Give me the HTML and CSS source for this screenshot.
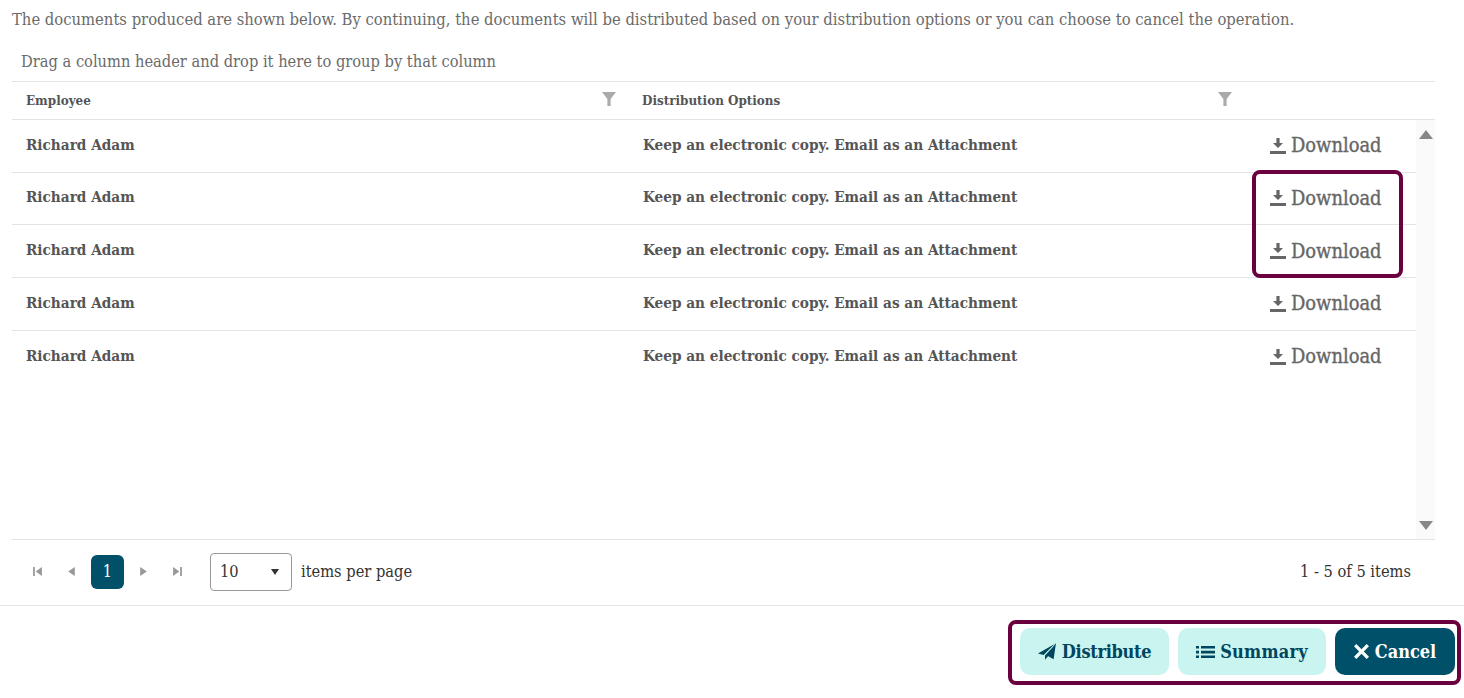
FILE: index.html
```html
<!DOCTYPE html>
<html lang="en">
<head>
  <meta charset="UTF-8" />
  <title>Distribute Documents</title>
  <link rel="stylesheet" href="styles.css">
</head>
<body>
  <p class="intro">The documents produced are shown below. By continuing, the documents will be distributed based on your distribution options or you can choose to cancel the operation.</p>

  <div class="grid">
    <div class="group-hint">Drag a column header and drop it here to group by that column</div>

    <div class="grid-head">
      <div class="head-cell">Employee
        <svg class="filter" viewBox="0 0 14 14"><path d="M0 0h14L8.6 7v7H5.4V7z"/></svg>
      </div>
      <div class="head-cell">Distribution Options
        <svg class="filter" viewBox="0 0 14 14"><path d="M0 0h14L8.6 7v7H5.4V7z"/></svg>
      </div>
      <div></div>
    </div>

    <div class="grid-body">
      <div class="rows">
        <div class="row">
          <div class="cell">Richard Adam</div>
          <div class="cell cell-opt">Keep an electronic copy. Email as an Attachment</div>
          <a class="download"><svg viewBox="0 0 16 16"><path d="M6.4 0h3.2v5H13L8 10 3 5h3.4zM0 13h16v3H0z"/></svg>Download</a>
        </div>
        <div class="row">
          <div class="cell">Richard Adam</div>
          <div class="cell cell-opt">Keep an electronic copy. Email as an Attachment</div>
          <a class="download"><svg viewBox="0 0 16 16"><path d="M6.4 0h3.2v5H13L8 10 3 5h3.4zM0 13h16v3H0z"/></svg>Download</a>
        </div>
        <div class="row">
          <div class="cell">Richard Adam</div>
          <div class="cell cell-opt">Keep an electronic copy. Email as an Attachment</div>
          <a class="download"><svg viewBox="0 0 16 16"><path d="M6.4 0h3.2v5H13L8 10 3 5h3.4zM0 13h16v3H0z"/></svg>Download</a>
        </div>
        <div class="row">
          <div class="cell">Richard Adam</div>
          <div class="cell cell-opt">Keep an electronic copy. Email as an Attachment</div>
          <a class="download"><svg viewBox="0 0 16 16"><path d="M6.4 0h3.2v5H13L8 10 3 5h3.4zM0 13h16v3H0z"/></svg>Download</a>
        </div>
        <div class="row row-last">
          <div class="cell">Richard Adam</div>
          <div class="cell cell-opt">Keep an electronic copy. Email as an Attachment</div>
          <a class="download"><svg viewBox="0 0 16 16"><path d="M6.4 0h3.2v5H13L8 10 3 5h3.4zM0 13h16v3H0z"/></svg>Download</a>
        </div>
      </div>
      <div class="scrollbar">
        <svg viewBox="0 0 14 10"><path d="M7 0l7 9H0z"/></svg>
        <svg viewBox="0 0 14 10"><path d="M7 10L0 1h14z"/></svg>
      </div>
    </div>

    <div class="pager">
      <svg class="pg-icon" viewBox="0 0 10 10"><path d="M1 1h1.6v8H1zM9 1v8L3.4 5z"/></svg>
      <svg class="pg-icon pg-prev" viewBox="0 0 10 10"><path d="M8 1v8L2 5z"/></svg>
      <span class="pg-current">1</span>
      <svg class="pg-icon pg-next" viewBox="0 0 10 10"><path d="M2 1v8l6-4z"/></svg>
      <svg class="pg-icon pg-end" viewBox="0 0 10 10"><path d="M1 1v8l5.6-4zM7.4 1H9v8H7.4z"/></svg>
      <div class="pg-size">10<span class="pg-caret"></span></div>
      <span class="pg-label">items per page</span>
      <span class="pg-info">1 - 5 of 5 items</span>
    </div>
  </div>

  <div class="actions">
    <button class="btn btn-distribute">
      <svg viewBox="0 0 18 18"><path d="M16.6 1L0 10.5l5.6 1.6zM17.2 1.4L7 12.6v4.2l3-3.6zM18 0L8.6 12.2l7 4z"/></svg>Distribute
    </button>
    <button class="btn btn-summary">
      <svg viewBox="0 0 19 18"><path d="M0 3h3v2.600H0zM5 3h14v2.600H5zM0 7.800h3v2.600H0zM5 7.800h14v2.600H5zM0 12.400h3V15H0zM5 12.400h14V15H5z"/></svg>Summary
    </button>
    <button class="btn btn-dark">
      <svg viewBox="0 0 16 16"><path d="M2.500 0L8 5.500 13.500 0 16 2.500 10.500 8l5.500 5.500-2.500 2.500L8 10.500 2.500 16 0 13.500 5.500 8 0 2.500z"/></svg>Cancel
    </button>
  </div>

  <!-- callouts -->
  <div class="callout callout-downloads"></div>
  <div class="callout callout-actions"></div>
</body>
</html>
```

FILE: styles.css
```css
* {
  box-sizing: border-box;
}

body {
  margin: 0;
  height: 698px;
  overflow: hidden;
  position: relative;
  background: #fff;
  font-family: "DejaVu Serif Condensed", "DejaVu Serif", serif;
  color: #555;
}

.intro {
  margin: 0;
  padding: 10px 12px 0;
  height: 40px;
  font-size: 16.47px;
  line-height: 20px;
  white-space: nowrap;
  color: #6b6b6b;
}

.grid {
  margin: 0 29px 0 12px;
}

.group-hint {
  height: 41px;
  padding: 12px 9px 0;
  font-size: 16.3px;
  line-height: 20px;
  color: #6b6b6b;
}

.grid-head {
  display: grid;
  grid-template-columns: 616px 616px 1fr;
  height: 39px;
  border-top: 1px solid #e4e4e4;
  border-bottom: 1px solid #e4e4e4;
}

.head-cell {
  position: relative;
  padding: 9px 14px 0;
  font-size: 13.3px;
  line-height: 20px;
  font-weight: 700;
  color: #555;
}

.filter {
  position: absolute;
  top: 10px;
  right: 12px;
  width: 14px;
  height: 14px;
  fill: #aaa;
}

.grid-body {
  display: flex;
  height: 420px;
  border-bottom: 1px solid #e4e4e4;
}

.rows {
  flex: 1;
}

.row {
  display: grid;
  grid-template-columns: 616px 616px 1fr;
  height: 52.7px;
  border-bottom: 1px solid #e4e4e4;
  align-items: center;
  font-size: 15.2px;
  font-weight: 700;
}

.row-last {
  border-bottom: 0;
}

.cell {
  padding: 0 14px;
  margin-top: -2.4px;
}

.cell-opt {
  padding-left: 15px;
}

.download {
  display: flex;
  align-items: center;
  justify-content: flex-start;
  padding-left: 26px;
  margin-top: -0.4px;
  font-size: 19.9px;
  font-weight: 400;
  -webkit-text-stroke: 0.35px #666;
  color: #666;
}

.download svg {
  width: 16px;
  height: 16px;
  margin-right: 5px;
  fill: #666;
}

.scrollbar {
  width: 19px;
  background: #fafafa;
  display: flex;
  flex-direction: column;
  justify-content: space-between;
  align-items: center;
  padding: 10px 0 9px;
}

.scrollbar svg {
  width: 14px;
  height: 10px;
  fill: #888;
}

.pager {
  display: flex;
  align-items: center;
  height: 65px;
  padding: 0 24px 2px 20px;
  font-size: 16.3px;
  color: #333;
}

.pg-icon {
  width: 11px;
  height: 11px;
  fill: #999;
}

.pg-prev {
  margin-left: 23px;
}

.pg-current {
  width: 33px;
  height: 34px;
  margin-left: 14px;
  border-radius: 6px;
  background: #00506a;
  color: #fff;
  text-align: center;
  line-height: 34px;
}

.pg-next {
  margin-left: 14px;
}

.pg-end {
  margin-left: 23px;
}

.pg-size {
  position: relative;
  width: 82px;
  height: 38px;
  margin-left: 27px;
  padding-left: 9px;
  border: 1px solid #999;
  border-radius: 4px;
  line-height: 36px;
}

.pg-caret {
  position: absolute;
  top: 15px;
  right: 12px;
  border-style: solid;
  border-width: 6px 4.5px 0;
  border-color: #333 transparent transparent;
}

.pg-label {
  margin-left: 9px;
}

.pg-info {
  margin-left: auto;
}

.actions {
  display: flex;
  justify-content: flex-end;
  gap: 9px;
  height: 93px;
  padding: 22px 9px 0 0;
  border-top: 1px solid #e4e4e4;
}

.btn {
  display: flex;
  align-items: center;
  justify-content: center;
  gap: 5px;
  height: 47px;
  padding: 0;
  border: 0;
  border-radius: 10px;
  background: #caf4f0;
  color: #00465e;
  font-family: inherit;
  font-size: 18px;
  font-weight: 700;
}

.btn svg {
  width: 18px;
  height: 18px;
  fill: #00465e;
}

.btn-distribute {
  width: 149px;
  gap: 6px;
  letter-spacing: -0.3px;
}

.btn-summary {
  width: 148px;
  letter-spacing: 0.2px;
}

.btn-summary svg {
  width: 19px;
}

.btn-dark {
  width: 120px;
  gap: 6px;
  background: #00506a;
  color: #fff;
}

.btn-dark svg {
  width: 15px;
  height: 15px;
  fill: #fff;
}

/* outlines drawn over the screenshot */
.callout {
  position: absolute;
  border: 4px solid #6b003f;
  border-radius: 8px;
  pointer-events: none;
}

.callout-downloads {
  left: 1252px;
  top: 170px;
  width: 151px;
  height: 108px;
}

.callout-actions {
  left: 1008px;
  top: 620px;
  width: 453px;
  height: 65px;
}
```
